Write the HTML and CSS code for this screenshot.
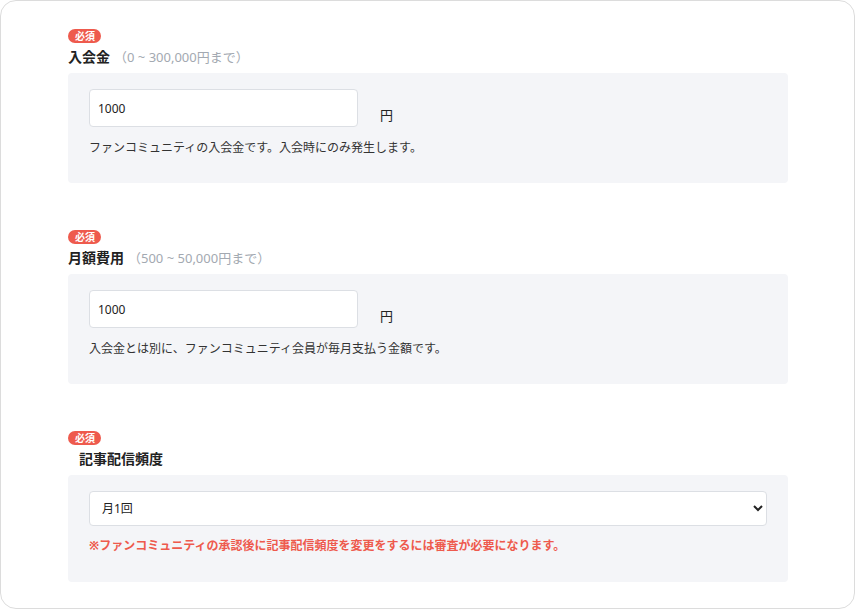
FILE: index.html
```html
<!DOCTYPE html>
<html lang="ja">
<head>
  <meta charset="UTF-8">
  <meta name="viewport" content="width=device-width, initial-scale=1.0">
  <title>料金設定</title>
  <link rel="stylesheet" href="styles.css">
</head>
<body>
  <div class="card">
    <div class="field">
      <span class="badge">必須</span>
      <div class="label">入会金<span class="hint">（0 ~ 300,000円まで）</span></div>
      <div class="panel">
        <div class="price-row">
          <input type="text" class="text-input" value="1000">
          <span class="unit">円</span>
        </div>
        <p class="note">ファンコミュニティの入会金です。入会時にのみ発生します。</p>
      </div>
    </div>

    <div class="field">
      <span class="badge">必須</span>
      <div class="label">月額費用<span class="hint">（500 ~ 50,000円まで）</span></div>
      <div class="panel">
        <div class="price-row">
          <input type="text" class="text-input" value="1000">
          <span class="unit">円</span>
        </div>
        <p class="note">入会金とは別に、ファンコミュニティ会員が毎月支払う金額です。</p>
      </div>
    </div>

    <div class="field">
      <span class="badge">必須</span>
      <div class="label label-indent">記事配信頻度</div>
      <div class="panel panel-select">
        <select class="select-input">
          <option>月1回</option>
          <option>月2回</option>
          <option>月4回</option>
        </select>
        <p class="note note-warn">※ファンコミュニティの承認後に記事配信頻度を変更をするには審査が必要になります。</p>
      </div>
    </div>
  </div>
</body>
</html>
```

FILE: styles.css
```css
body {
  margin: 0;
  font-family: "Noto Sans", "Noto Sans CJK JP", sans-serif;
  color: #222;
  background: #fff;
}

.card {
  height: 609px;
  box-sizing: border-box;
  border: 1px solid #dcdcdc;
  border-radius: 16px;
  padding: 28px 66px 0 67px;
}

.field {
  display: flex;
  flex-direction: column;
  align-items: flex-start;
  margin-bottom: 47px;
}

.badge {
  display: inline-block;
  height: 14px;
  line-height: 14px;
  padding: 0 6px 0 7px;
  border-radius: 7px;
  background: #ee5a4d;
  color: #fff;
  font-size: 10px;
  font-weight: 700;
}

.label {
  margin: 4px 0 6px;
  line-height: 20px;
  font-size: 14px;
  font-weight: 700;
}

.label-indent {
  padding-left: 11px;
  margin: 4px 0 6px;
}

.hint {
  margin-left: 4px;
  font-size: 13px;
  font-weight: 400;
  color: #a3a9b1;
}

.panel {
  align-self: stretch;
  background: #f4f5f8;
  border-radius: 4px;
  padding: 16px 21px 27px;
}

.panel-select {
  padding-bottom: 28px;
}

.price-row {
  display: flex;
  align-items: flex-end;
}

.text-input {
  width: 269px;
  height: 38px;
  box-sizing: border-box;
  padding: 0 8px;
  border: 1px solid #dcdfe4;
  border-radius: 4px;
  background: #fff;
  font-family: inherit;
  font-size: 12px;
  color: #222;
}

.unit {
  margin-left: 22px;
  margin-bottom: 4px;
  line-height: 16px;
  font-size: 13px;
}

.note {
  margin: 13px 0 0;
  line-height: 16px;
  font-size: 12px;
  color: #333;
}

.select-input {
  width: 100%;
  height: 35px;
  box-sizing: border-box;
  padding: 0 8px;
  border: 1px solid #dcdfe4;
  border-radius: 4px;
  background: #fff;
  font-family: inherit;
  font-size: 12px;
  color: #222;
}

.note-warn {
  margin-top: 12px;
  color: #ee5a4d;
  font-weight: 700;
}
```
